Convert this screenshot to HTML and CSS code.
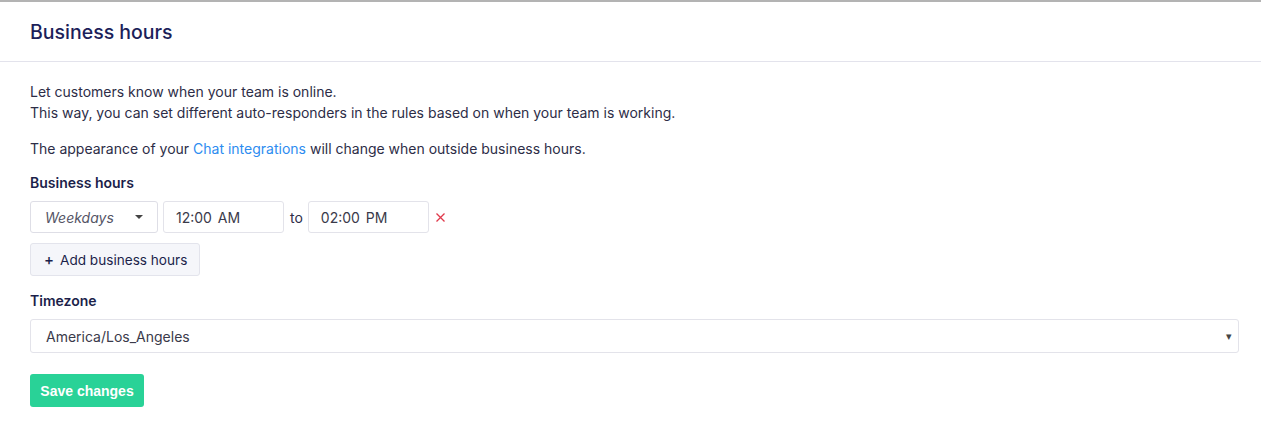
FILE: index.html
```html
<!DOCTYPE html>
<html>
<head>
<meta charset="utf-8">
<link rel="stylesheet" href="styles.css">
</head>
<body>
<div class="page">
  <header class="header">
    <h1 class="title">Business hours</h1>
  </header>
  <main class="content">
    <p class="intro">Let customers know when your team is online.<br>This way, you can set different auto-responders in the rules based on when your team is working.</p>
    <p class="intro note">The appearance of your <a class="link" href="#">Chat integrations</a> will change when outside business hours.</p>

    <div class="label">Business hours</div>
    <div class="hours-row">
      <div class="day-select"><span class="day-text">Weekdays</span><span class="caret"></span></div>
      <div class="time-input">12:00 AM</div>
      <span class="to">to</span>
      <div class="time-input">02:00 PM</div>
      <svg class="remove" width="9" height="9" viewBox="0 0 9 9"><path d="M0.5 0.5L8.5 8.5M8.5 0.5L0.5 8.5" stroke="#e0394b" stroke-width="1.3" fill="none"/></svg>
    </div>
    <button class="add-btn"><span class="plus">+</span> Add business hours</button>

    <div class="label tz-label">Timezone</div>
    <div class="tz-select"><span>America/Los_Angeles</span><span class="tz-caret">&#x25BE;</span></div>

    <button class="save-btn">Save changes</button>
  </main>
</div>
</body>
</html>
```
FILE: styles.css
```css
* { box-sizing: border-box; }
html, body { margin: 0; padding: 0; background: #fff; }
body {
  font-family: Inter, "Noto Sans", sans-serif;
  color: #2d2d47;
  border-top: 2px solid #b3b3b3;
}
.page { width: 1261px; }
.header {
  height: 60px;
  border-bottom: 1px solid #e3e3ec;
  padding: 0 30px;
  display: flex;
  align-items: center;
}
.title {
  margin: 0;
  font-size: 19.5px;
  font-weight: 500;
  color: #1c1f5a;
  padding-top: 1px;
}
.content {
  padding: 19px 22px 0 30px;
}
.intro {
  margin: 0;
  font-size: 14px;
  line-height: 21px;
}
.note { margin-top: 15px; }
.link { color: #2d8cf0; text-decoration: none; }
.label {
  font-size: 14px;
  font-weight: 600;
  color: #1c1f4a;
  margin-top: 14px;
  line-height: 20px;
}
.hours-row {
  display: flex;
  align-items: center;
  margin-top: 8px;
  height: 32px;
}
.day-select {
  width: 128px;
  height: 32px;
  border: 1px solid #dedee6;
  border-radius: 3px;
  display: flex;
  align-items: center;
  justify-content: space-between;
  padding: 0 14px 0 14px;
  font-size: 14px;
  color: #555566;
}
.day-text { font-style: italic; }
.caret {
  width: 0; height: 0;
  border-left: 4px solid transparent;
  border-right: 4px solid transparent;
  border-top: 4px solid #444;
}
.time-input {
  width: 121px;
  height: 32px;
  border: 1px solid #e3e3ea;
  border-radius: 3px;
  margin-left: 5px;
  padding-left: 12px;
  display: flex;
  align-items: center;
  font-size: 14px;
  color: #3a3a4a;
  word-spacing: 2px;
}
.to {
  font-size: 14px;
  margin: 0 5px 0 6px;
}
.to + .time-input { margin-left: 0; }
.remove {
  margin-left: 7px;
}
.add-btn {
  display: flex;
  align-items: center;
  margin-top: 10px;
  height: 33px;
  padding: 0 12px 0 13px;
  background: #f5f6fa;
  border: 1px solid #e3e4ec;
  border-radius: 3px;
  font-family: Inter, "Noto Sans", sans-serif;
  font-size: 13.6px;
  font-weight: 400;
  color: #1c1f4a;
}
.plus { font-size: 15px; margin-right: 6px; font-weight: 500; }
.tz-label { margin-top: 15px; }
.tz-select {
  margin-top: 8px;
  height: 34px;
  border: 1px solid #e3e3ea;
  border-radius: 3px;
  display: flex;
  align-items: center;
  justify-content: space-between;
  padding: 0 6px 0 15px;
  font-size: 14px;
  color: #3a3a4a;
}
.tz-caret { font-size: 11px; color: #444; }
.save-btn {
  margin-top: 21px;
  height: 33px;
  width: 114px;
  background: #29d297;
  border: none;
  border-radius: 3px;
  color: #fff;
  font-family: "Liberation Sans", Arial, sans-serif;
  font-weight: 700;
  font-size: 14px;
  display: flex;
  align-items: center;
  justify-content: center;
}
```
